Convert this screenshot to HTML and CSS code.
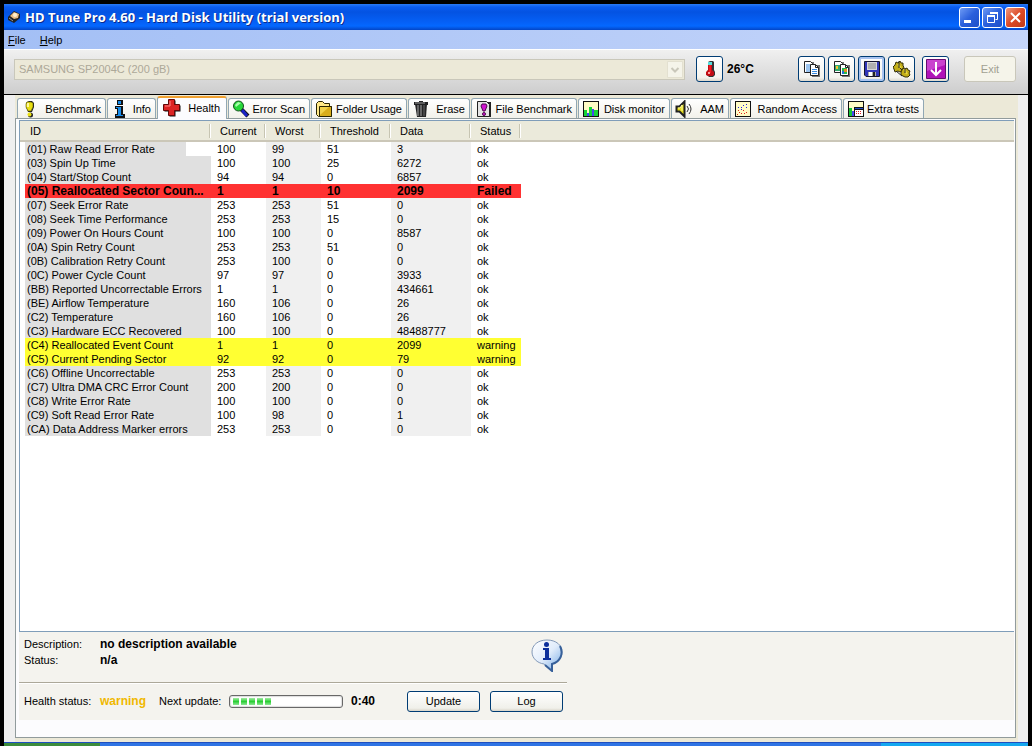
FILE: index.html
```
<!DOCTYPE html>
<html lang="en">
<head>
    <meta charset="UTF-8">
    <meta name="viewport" content="width=device-width, initial-scale=1.0">
    <title>HD Tune Pro 4.60 - Hard Disk Utility (trial version)</title>
    <link rel="stylesheet" href="styles.css">
</head>
<body>
    <header class="titlebar">
        <svg class="app-icon" viewBox="0 0 14 14">
            <path d="M1 7l6-6 6 3v4l-6 5-6-3z" fill="#222"/>
            <path d="M3 6l4-4 5 2-1 4-4 1z" fill="#e9bd86"/>
            <circle cx="8" cy="5" r="2" fill="#fff0d0"/>
            <path d="M2 8l4 3" stroke="#999"/>
        </svg>
        <h1>HD Tune Pro 4.60 - Hard Disk Utility (trial version)</h1>
        <div class="caption-buttons">
            <button type="button" aria-label="Minimize"><svg viewBox="0 0 19 19"><path d="M4 12h7v3H4z" fill="#fff"/></svg></button>
            <button type="button" aria-label="Restore"><svg viewBox="0 0 19 19"><path d="M7.500 6v-1.500h7v7h-2" fill="none" stroke="#fff"/><path d="M7 4h8v2H7z" fill="#fff"/><path d="M4.500 8.500h7v6h-7z" fill="none" stroke="#fff"/><path d="M4 7h8v2H4z" fill="#fff"/></svg></button>
            <button type="button" class="close" aria-label="Close"><svg viewBox="0 0 19 19"><path d="M5 5l9 9M14 5l-9 9" stroke="#fff" stroke-width="2"/></svg></button>
        </div>
    </header>

    <nav class="menubar">
        <a href="#"><u>F</u>ile</a>
        <a href="#"><u>H</u>elp</a>
    </nav>

    <div class="toolbar">
        <div class="drive">
            <select aria-label="Drive" disabled>
                <option>SAMSUNG SP2004C (200 gB)</option>
            </select>
            <svg viewBox="0 0 16 17"><path d="M.5.500h15v16H.5z" fill="#f5f4ea" stroke="#e3e0d0"/><path d="M4.500 7l3.500 3.500L11.500 7" fill="none" stroke="#c9c7ba" stroke-width="2"/></svg>
        </div>
        <button type="button" class="tool" aria-label="Temperature">
            <svg viewBox="0 0 18 18"><path d="M9 1h3l1 1v8l1 2v3l-2 2H8l-2-2v-3l1-2V2z" fill="#333"/><path d="M7 2h4v8l2 2v3l-2 1H7l-2-1v-3l2-2z" fill="#c00c14"/><path d="M7 2h4v3H7z" fill="#5dd"/><path d="M8 5h2v8H8z" fill="#f01820"/><path d="M7 12h2v2H7z" fill="#ff9a9a"/></svg>
        </button>
        <span class="temp">26°C</span>
        <div class="tool-group">
            <button type="button" class="tool" aria-label="Copy text">
                <svg viewBox="0 0 18 18"><path d="M2 2h9v11H2zM9 5h8v12H9z" fill="#777"/><path d="M1.500 1.500h6l2 2v9h-8z" fill="#fff" stroke="#222"/><path d="M3 5h4M3 7h4M3 9h4M3 11h4" stroke="#3a8be0"/><path d="M7.500 4.500h5l3 3v8h-8z" fill="#fff" stroke="#222"/><path d="M12.500 4.500v3h3" fill="none" stroke="#222"/><path d="M9 9.500h5M9 11.500h5M9 13.500h5" stroke="#3a8be0"/></svg>
            </button>
            <button type="button" class="tool" aria-label="Copy picture">
                <svg viewBox="0 0 18 18"><path d="M2 2h9v11H2zM9 5h8v12H9z" fill="#777"/><path d="M1.500 1.500h6l2 2v9h-8z" fill="#fff" stroke="#222"/><path d="M2 5h5v6H2z" fill="#35a86b"/><path d="M3 6h2v3H3z" fill="#f6c730"/><path d="M7.500 4.500h5l3 3v8h-8z" fill="#fff" stroke="#222"/><path d="M12.500 4.500v3h3" fill="none" stroke="#222"/><path d="M9 8h5v6H9z" fill="#28b94c"/><path d="M11 9h3v3h-3z" fill="#e69022"/><path d="M9 11h2v3H9z" fill="#2470d8"/></svg>
            </button>
            <button type="button" class="tool hot" aria-label="Save">
                <svg viewBox="0 0 18 18"><path d="M1.500 1.500h15v15H3l-1.500-1.500z" fill="#3035b8" stroke="#15152e"/><path d="M4 2h10v8H4z" fill="#d8d8d8"/><path d="M5 4h8M5 6h8M5 8h8" stroke="#888"/><path d="M5 12h8v4H5z" fill="#aaa"/><path d="M6 12h3v4H6z" fill="#fff"/><path d="M10 12h2v4h-2z" fill="#222"/></svg>
            </button>
            <button type="button" class="tool" aria-label="Options">
                <svg viewBox="0 0 18 18"><g fill="#c3ae18" stroke="#332e06"><path d="M3 2l2 1 2-2 1 2h2v3l1 1-1 3-3 2-2-1-3 1-1-3-1-2 2-2z"/><path d="M10 8l2 1 2-1 1 2 2 1-1 2 1 2-2 2h-3l-2-1-2-1v-3z"/></g><path d="M5 4l3 4M11 9l3 5" stroke="#e8d840" stroke-width="2"/><path d="M6 1v7M12 8v5M3 11l6 5M7 8l2 2" stroke="#222"/></svg>
            </button>
        </div>
        <button type="button" class="tool" aria-label="Minimize to tray">
            <svg viewBox="0 0 20 20"><path d="M.5.500h19v19H.5z" fill="#b012b8" stroke="#660d70"/><path d="M1 1h18v5L1 12z" fill="#ca43cf"/><path d="M10 3v13M5 11l5 5 5-5" fill="none" stroke="#fff" stroke-width="2"/></svg>
        </button>
        <button type="button" class="exit" disabled>Exit</button>
    </div>

    <main class="client">
        <div class="tabs" role="tablist">
            <button type="button" role="tab">
                <svg viewBox="0 0 18 18"><path d="M6 2l2-1h3l2 2v4l-2 5H7L5 7V3z" fill="#222"/><path d="M6 2h4l2 1v4l-2 4H7L5 7V4z" fill="#e9df12" stroke="#5b5600" stroke-width=".6"/><path d="M6 3h2v4H6z" fill="#fff9a0"/><circle cx="9.500" cy="15" r="2.500" fill="#222"/><circle cx="8.500" cy="14.500" r="2" fill="#e9df12"/></svg>
                Benchmark
            </button>
            <button type="button" role="tab">
                <svg viewBox="0 0 18 18"><path d="M6 0h6v5H6zM4 6h8v8h2v4H4v-4h2V9H4z" fill="#111"/><path d="M7 1h3v3H7zM5 7h5v8h2v1H5v-1h2V8H5z" fill="#168bea"/></svg>
                Info
            </button>
            <button type="button" role="tab" class="active" aria-selected="true">
                <svg viewBox="0 0 18 18"><path d="M6.500 1.500h6v5h5v6h-5v5h-6v-5h-5v-6h5z" fill="#111"/><path d="M5.500.500h6v5h5v6h-5v5h-6v-5h-5v-6h5z" fill="#dc2424" stroke="#610808"/><path d="M7 2v5H2" fill="none" stroke="#ff8585"/></svg>
                Health
            </button>
            <button type="button" role="tab">
                <svg viewBox="0 0 18 18"><path d="M9 9l7 7" stroke="#111" stroke-width="4"/><path d="M10 10l5 6" stroke="#1922c6" stroke-width="3"/><circle cx="6.500" cy="6" r="5" fill="#25d738" stroke="#164f1c"/><path d="M3 5l3-3 3 1-5 4z" fill="#a7ffa9"/></svg>
                Error Scan
            </button>
            <button type="button" role="tab">
                <svg viewBox="0 0 18 18"><path d="M1.500 3.500l2-2h4l2 2h5v3h2v10h-13l-2-2z" fill="#ffe887" stroke="#292400"/><path d="M4.500 6.500h12v10h-12z" fill="#d9ad19" stroke="#292400"/><path d="M5 7h9L5 15z" fill="#f1d148"/></svg>
                Folder Usage
            </button>
            <button type="button" role="tab">
                <svg viewBox="0 0 18 18"><path d="M3 4h12l-1 13H5z" fill="#252525"/><path d="M6 5v11M9 5v11" stroke="#aaa"/><path d="M12 5v11" stroke="#666"/><path d="M2 2h5V1h4v1h5v3H2z" fill="#222"/><path d="M3 3h10" stroke="#999"/></svg>
                Erase
            </button>
            <button type="button" role="tab">
                <svg viewBox="0 0 18 18"><path d="M4 2h12v15H4z" fill="#222"/><path d="M2.500 1.500h9l3 3v12h-12z" fill="#e4e4e4" stroke="#222"/><path d="M7 4h4l1 2-2 5H8L6 6z" fill="#cf14cf" stroke="#4c094c"/><circle cx="9" cy="14" r="1.500" fill="#cf14cf" stroke="#4c094c"/></svg>
                File Benchmark
            </button>
            <button type="button" role="tab">
                <svg viewBox="0 0 18 18" shape-rendering="crispEdges"><path d="M1 1h16v16H1z" fill="#111"/><path d="M2 2h14v14H2z" fill="#fffbc5"/><path d="M2 10h3v6H2zM7 7h3v9H7zM12 10h4v6h-4z" fill="#16d438"/><path d="M5 13h2v3H5zM10 9h2v7h-2z" fill="#4747ef"/></svg>
                Disk monitor
            </button>
            <button type="button" role="tab">
                <svg viewBox="0 0 18 18"><path d="M1.500 6.500h3l5-5v15l-5-5h-3z" fill="#e5dc18" stroke="#222" stroke-width="2"/><path d="M3 8h2l2-3v6" fill="none" stroke="#fffba0"/><path d="M12 6q3 3 0 6M14 4q4 5 0 10" fill="none" stroke="#333"/></svg>
                AAM
            </button>
            <button type="button" role="tab">
                <svg viewBox="0 0 18 18" shape-rendering="crispEdges"><path d="M1 1h16v16H1z" fill="#111"/><path d="M2 2h14v14H2z" fill="#fffbc5"/><path d="M3 14h1v1H3zM5 12h1v1H5zM7 13h1v1H7zM9 10h1v1H9zM12 12h1v1h-1zM4 10h1v1H4zM10 13h1v1h-1z" fill="#e02020"/><path d="M4 7h1v1H4zM7 7h1v1H7zM9 5h1v1H9zM12 4h1v1h-1zM12 7h1v1h-1zM7 9h1v1H7z" fill="#2424e0"/></svg>
                Random Access
            </button>
            <button type="button" role="tab">
                <svg viewBox="0 0 18 18" shape-rendering="crispEdges"><path d="M1 1h16v16H1z" fill="#111"/><path d="M2 2h14v14H2z" fill="#fffbc5"/><path d="M2 8h3v8H2z" fill="#16c438"/><path d="M5 11h2v5H5z" fill="#4747ef"/><path d="M7 7h10v10H7z" fill="#111"/><path d="M8 10h8v6H8z" fill="#fff"/><path d="M8 8h8v1H8z" fill="#264fc9"/><path d="M9 11h1v1H9zM11 11h1v1h-1zM13 11h1v1h-1zM9 13h1v1H9zM11 13h1v1h-1zM13 13h1v1h-1z" fill="#d22"/></svg>
                Extra tests
            </button>
        </div>

        <section class="panel">
            <div class="list">
                <table>
                    <colgroup>
                        <col class="col-id">
                        <col class="col-num">
                        <col class="col-num">
                        <col class="col-threshold">
                        <col class="col-data">
                        <col class="col-status">
                        <col>
                    </colgroup>
                    <thead>
                        <tr><th>ID</th><th>Current</th><th>Worst</th><th>Threshold</th><th>Data</th><th>Status</th><th></th></tr>
                    </thead>
                    <tbody>
                        <tr class="focused"><td>(01) Raw Read Error Rate</td><td>100</td><td>99</td><td>51</td><td>3</td><td>ok</td></tr>
                        <tr><td>(03) Spin Up Time</td><td>100</td><td>100</td><td>25</td><td>6272</td><td>ok</td></tr>
                        <tr><td>(04) Start/Stop Count</td><td>94</td><td>94</td><td>0</td><td>6857</td><td>ok</td></tr>
                        <tr class="failed"><td>(05) Reallocated Sector Coun...</td><td>1</td><td>1</td><td>10</td><td>2099</td><td>Failed</td></tr>
                        <tr><td>(07) Seek Error Rate</td><td>253</td><td>253</td><td>51</td><td>0</td><td>ok</td></tr>
                        <tr><td>(08) Seek Time Performance</td><td>253</td><td>253</td><td>15</td><td>0</td><td>ok</td></tr>
                        <tr><td>(09) Power On Hours Count</td><td>100</td><td>100</td><td>0</td><td>8587</td><td>ok</td></tr>
                        <tr><td>(0A) Spin Retry Count</td><td>253</td><td>253</td><td>51</td><td>0</td><td>ok</td></tr>
                        <tr><td>(0B) Calibration Retry Count</td><td>253</td><td>100</td><td>0</td><td>0</td><td>ok</td></tr>
                        <tr><td>(0C) Power Cycle Count</td><td>97</td><td>97</td><td>0</td><td>3933</td><td>ok</td></tr>
                        <tr><td>(BB) Reported Uncorrectable Errors</td><td>1</td><td>1</td><td>0</td><td>434661</td><td>ok</td></tr>
                        <tr><td>(BE) Airflow Temperature</td><td>160</td><td>106</td><td>0</td><td>26</td><td>ok</td></tr>
                        <tr><td>(C2) Temperature</td><td>160</td><td>106</td><td>0</td><td>26</td><td>ok</td></tr>
                        <tr><td>(C3) Hardware ECC Recovered</td><td>100</td><td>100</td><td>0</td><td>48488777</td><td>ok</td></tr>
                        <tr class="warn"><td>(C4) Reallocated Event Count</td><td>1</td><td>1</td><td>0</td><td>2099</td><td>warning</td></tr>
                        <tr class="warn"><td>(C5) Current Pending Sector</td><td>92</td><td>92</td><td>0</td><td>79</td><td>warning</td></tr>
                        <tr><td>(C6) Offline Uncorrectable</td><td>253</td><td>253</td><td>0</td><td>0</td><td>ok</td></tr>
                        <tr><td>(C7) Ultra DMA CRC Error Count</td><td>200</td><td>200</td><td>0</td><td>0</td><td>ok</td></tr>
                        <tr><td>(C8) Write Error Rate</td><td>100</td><td>100</td><td>0</td><td>0</td><td>ok</td></tr>
                        <tr><td>(C9) Soft Read Error Rate</td><td>100</td><td>98</td><td>0</td><td>1</td><td>ok</td></tr>
                        <tr><td>(CA) Data Address Marker errors</td><td>253</td><td>253</td><td>0</td><td>0</td><td>ok</td></tr>
                    </tbody>
                </table>
            </div>

            <div class="details">
                <div class="info-row">
                    <dl>
                        <dt>Description:</dt><dd>no description available</dd>
                        <dt>Status:</dt><dd>n/a</dd>
                    </dl>
                    <svg class="balloon" viewBox="0 0 32 34">
                        <defs>
                            <linearGradient id="bubble" x1="0" y1="0" x2="1" y2="1">
                                <stop offset="0" stop-color="#fff"/>
                                <stop offset=".5" stop-color="#e0ecfb"/>
                                <stop offset="1" stop-color="#6fa5e2"/>
                            </linearGradient>
                        </defs>
                        <path d="M16 2c9 0 15 5 15 12 0 6-4 10-10 12v7l-8-7C6 25 1 20 1 14 1 7 7 2 16 2z" fill="url(#bubble)" stroke="#8299b8"/>
                        <path d="M29 8c4 8 0 16-8 18v7l-7-6" fill="none" stroke="#37609a" stroke-width="2"/>
                        <circle cx="15.500" cy="6.500" r="2.500" fill="#0c2f9c"/>
                        <path d="M12 10h6v10h2v2h-8v-2h2v-8h-2z" fill="#0c2f9c"/>
                    </svg>
                </div>
                <div class="status-row">
                    <span class="caption">Health status:</span>
                    <strong class="health">warning</strong>
                    <span class="next">Next update:</span>
                    <div class="progress" role="progressbar" aria-label="Next update" aria-valuemin="0" aria-valuemax="100" aria-valuenow="36">
                        <div class="bar" style="width: 36%"></div>
                    </div>
                    <strong class="countdown">0:40</strong>
                    <button type="button">Update</button>
                    <button type="button">Log</button>
                </div>
            </div>
        </section>
    </main>

    <footer class="taskbar"></footer>
</body>
</html>
```
FILE: styles.css
```
* {
    box-sizing: border-box;
}
body {
    margin: 0;
    padding: 4px 4px 0;
    min-height: 100vh;
    display: flex;
    flex-direction: column;
    background: #000;
    color: #000;
    font-family: "Liberation Sans", Arial, sans-serif;
    font-size: 11px;
    line-height: 14px;
}
button, select {
    font: inherit;
    color: inherit;
}
svg {
    display: block;
    flex: none;
}

/* Title bar */
.titlebar {
    display: flex;
    align-items: center;
    height: 26px;
    padding: 0 2px 0 3px;
    background: linear-gradient(#2a7bf5 0, #0a5cf0 3px, #0453e2 8px, #0560f6 18px, #0468ff 22px, #0345c6 26px);
}
.app-icon {
    width: 14px;
    height: 14px;
    margin-right: 4px;
}
.titlebar h1 {
    flex: 1;
    margin: 0;
    color: #fff;
    font-family: "Open Sans", "Noto Sans", sans-serif;
    font-size: 13px;
    font-weight: bold;
    line-height: 18px;
    text-shadow: 1px 1px #0a2a8c;
}
.caption-buttons {
    display: flex;
    gap: 2px;
}
.caption-buttons button {
    width: 21px;
    height: 21px;
    padding: 0;
    border: 1px solid #fff;
    border-radius: 3px;
    background: linear-gradient(135deg, #6e9bf5, #2a5fdc 50%, #1e4fc8);
}
.caption-buttons .close {
    background: linear-gradient(135deg, #ef9a80, #dc4a26 50%, #c03a18);
}

/* Menu */
.menubar {
    display: flex;
    gap: 14px;
    height: 19px;
    padding: 3px 4px 0;
    background: linear-gradient(to right, #a3bff5, #c6d6fa);
}
.menubar a {
    color: #000;
    text-decoration: none;
}

/* Toolbar */
.toolbar {
    display: flex;
    align-items: center;
    height: 46px;
    padding: 0 12px 6px 10px;
    border-top: 1px solid #fff;
    border-bottom: 1px solid #000;
    background: linear-gradient(#f0f0f0, #cdcdcd);
}
.drive {
    display: grid;
    flex: 1;
    align-items: center;
}
.drive select, .drive svg {
    grid-area: 1 / 1;
}
.drive select {
    width: 100%;
    height: 21px;
    padding: 0 4px;
    appearance: none;
    border: 1px solid #c9c7ba;
    border-radius: 0;
    background: #ece9d8;
    color: #aca899;
    opacity: 1;
}
.drive svg {
    justify-self: end;
    width: 16px;
    height: 17px;
    margin-right: 2px;
    pointer-events: none;
}
.tool {
    display: flex;
    align-items: center;
    justify-content: center;
    width: 27px;
    height: 26px;
    padding: 0;
    border: 1px solid #003c74;
    border-radius: 3px;
    background: linear-gradient(#fff, #f4f3ee 85%, #dcd7cb);
}
.tool svg {
    width: 18px;
    height: 18px;
}
.tool.hot {
    box-shadow: inset 0 0 0 2px #a9c3f0;
}
.drive + .tool {
    margin-left: 11px;
}
.temp {
    width: 75px;
    padding-left: 4px;
    font-size: 12px;
    font-weight: bold;
}
.tool-group {
    display: flex;
    gap: 3px;
    margin-right: 7px;
}
.tool-group + .tool svg {
    width: 20px;
    height: 20px;
}
.exit {
    width: 52px;
    height: 26px;
    margin-left: 15px;
    border: 1px solid #c9c7ba;
    border-radius: 3px;
    background: #f5f4ea;
    color: #a1a192;
}

/* Tabs */
.client {
    flex: 1;
    display: flex;
    flex-direction: column;
    padding: 0 12px 4px 11px;
    background: linear-gradient(to right, #efefef 11px, #ece9d8 11px, #ece9d8 calc(100% - 10px), #efefef calc(100% - 10px));
}
.tabs {
    display: grid;
    grid-template-columns: 89px 49px 70px 82px 96px 62px 106px 92px 58px 112px 81px;
    column-gap: 1px;
    align-items: end;
    height: 23px;
    padding-left: 2px;
}
.tabs button {
    display: flex;
    align-items: center;
    justify-content: space-between;
    height: 20px;
    padding: 0 4px 0 3px;
    border: 1px solid #91a7b4;
    border-bottom: 0;
    border-radius: 3px 3px 0 0;
    background: linear-gradient(#fff, #f2f1ea);
    white-space: nowrap;
}
.tabs svg {
    width: 18px;
    height: 18px;
}
.tabs .active {
    position: relative;
    height: 23px;
    margin-bottom: -1px;
    padding: 0 6px 2px 5px;
    border-top: 2px solid #f0a030;
    background: #fcfcfe;
}

/* Health list */
.panel {
    flex: 1;
    display: flex;
    flex-direction: column;
    padding: 1px 1px 17px 3px;
    border: 1px solid #919b9c;
    background: #fcfcfe;
}
.list {
    flex: 1;
    border: 1px solid #7f9db9;
    border-right: 0;
    background: #fff;
}
table {
    width: 100%;
    table-layout: fixed;
    border-spacing: 0;
}
.col-id {
    width: 191px;
}
.col-num {
    width: 55px;
}
.col-threshold {
    width: 70px;
}
.col-data {
    width: 80px;
}
.col-status {
    width: 50px;
}
th {
    height: 21px;
    padding: 1px 0 0 9px;
    border-bottom: 2px solid #cbc7b8;
    background: linear-gradient(to right, #c7c5b2 1px, #fff 1px) right center / 2px 14px no-repeat, #ebeadb;
    font-weight: normal;
    text-align: left;
}
th:first-child {
    padding-left: 10px;
}
th:last-child {
    background: #ebeadb;
}
td {
    height: 14px;
    padding: 0 0 0 6px;
    white-space: nowrap;
}
td:first-child {
    padding-left: 2px;
    border-left: 5px solid #fff;
    background: #e0e0e0;
}
td:nth-child(3), td:nth-child(5) {
    background: #f0f0f0;
}
.focused td:first-child {
    background: linear-gradient(to right, #e0e0e0 161px, #fff 161px);
}
.failed td:nth-child(n) {
    background: #ff3232;
    font-size: 12px;
    font-weight: bold;
}
.warn td:nth-child(n) {
    background: #ffff32;
}

/* Details under the list */
.details {
    height: 88px;
    padding: 4px 5px 0;
    background: #f4f3ee;
}
.info-row {
    display: flex;
    justify-content: space-between;
    width: 548px;
    height: 47px;
    margin-left: -5px;
    padding: 0 4px 0 5px;
    border-bottom: 1px solid #aca899;
    box-shadow: 0 1px #fff;
}
dl {
    display: grid;
    grid-template-columns: 76px auto;
    align-content: start;
    margin: 0;
    line-height: 16px;
}
dd {
    margin: 0;
    font-size: 12px;
    font-weight: bold;
}
.balloon {
    width: 32px;
    height: 34px;
    margin-top: 2px;
}
.status-row {
    display: flex;
    align-items: center;
    height: 36px;
}
.caption {
    width: 76px;
}
.health {
    width: 59px;
    color: #f0b800;
    font-size: 12px;
}
.next {
    width: 70px;
}
.progress {
    width: 114px;
    height: 13px;
    padding: 2px 3px;
    border: 1px solid #686868;
    border-radius: 3px;
    background: #fff;
    box-shadow: inset 0 0 1px 1px #ddd;
}
.bar {
    height: 7px;
    background: repeating-linear-gradient(to right, transparent 0 6px, #fff 6px 8px), linear-gradient(#a5eba5, #2bcf35 50%, #8fe695);
}
.countdown {
    width: 64px;
    padding-left: 8px;
    font-size: 12px;
}
.status-row button {
    width: 73px;
    height: 21px;
    margin-right: 10px;
    padding: 0;
    border: 1px solid #003c74;
    border-radius: 3px;
    background: linear-gradient(#fff, #f0f0ea 85%, #d9d5c9);
}

.taskbar {
    height: 4px;
    border-top: 1px solid #1f4fc0;
    background: linear-gradient(to right, #3c8c3c 96px, #2f74e4 96px, #2f74e4 calc(100% - 147px), #14a8f0 calc(100% - 147px));
}
```
